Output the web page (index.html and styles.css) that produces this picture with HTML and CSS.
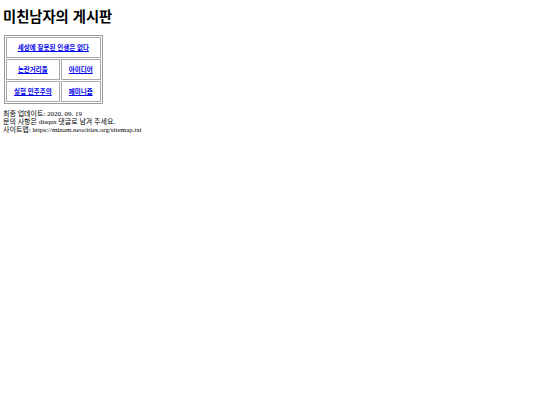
FILE: index.html
```html
<!DOCTYPE html>
<html lang="ko">
<head>
<meta charset="utf-8">
<title>미친남자의 게시판</title>
<link rel="stylesheet" href="styles.css">
</head>
<body>
<h1 class="title">미친남자의 게시판</h1>
<table class="menu">
  <tr><td colspan="2"><a href="#">세상에 잘못된 인생은 없다</a></td></tr>
  <tr><td><a href="#">논란거리들</a></td><td><a href="#">아이디어</a></td></tr>
  <tr><td><a href="#">실험 민주주의</a></td><td><a href="#">페미니즘</a></td></tr>
</table>
<p class="info">최종 업데이트: 2020. 09. 19<br>문의 사항은 disqus 댓글로 남겨 주세요.<br>사이트맵: https://minam.neocities.org/sitemap.txt</p>
</body>
</html>
```
FILE: styles.css
```css
body {
  margin: 4px 3px;
  font-family: "Liberation Serif", "Noto Sans CJK KR", serif;
  font-size: 7px;
  color: #000;
  background: #fff;
}
.title {
  font-family: "Liberation Sans", "Noto Sans CJK KR", sans-serif;
  font-size: 14.3px;
  font-weight: bold;
  margin: 4px 0 9px 0;
  line-height: 18px;
}
.menu {
  margin-left: 1px;
  border: 1px solid #9a9a9a;
  border-spacing: 1px;
}
.menu td {
  border: 1px solid #a8a8a8;
  padding: 5.5px 7px;
  text-align: center;
  font-family: "Liberation Sans", "Noto Sans CJK KR", sans-serif;
  font-size: 6.5px;
  font-weight: bold;
  line-height: 8px;
}
.menu a {
  color: #0000ee;
}
.info {
  margin: 6px 0 0 0;
  line-height: 8px;
}
```
